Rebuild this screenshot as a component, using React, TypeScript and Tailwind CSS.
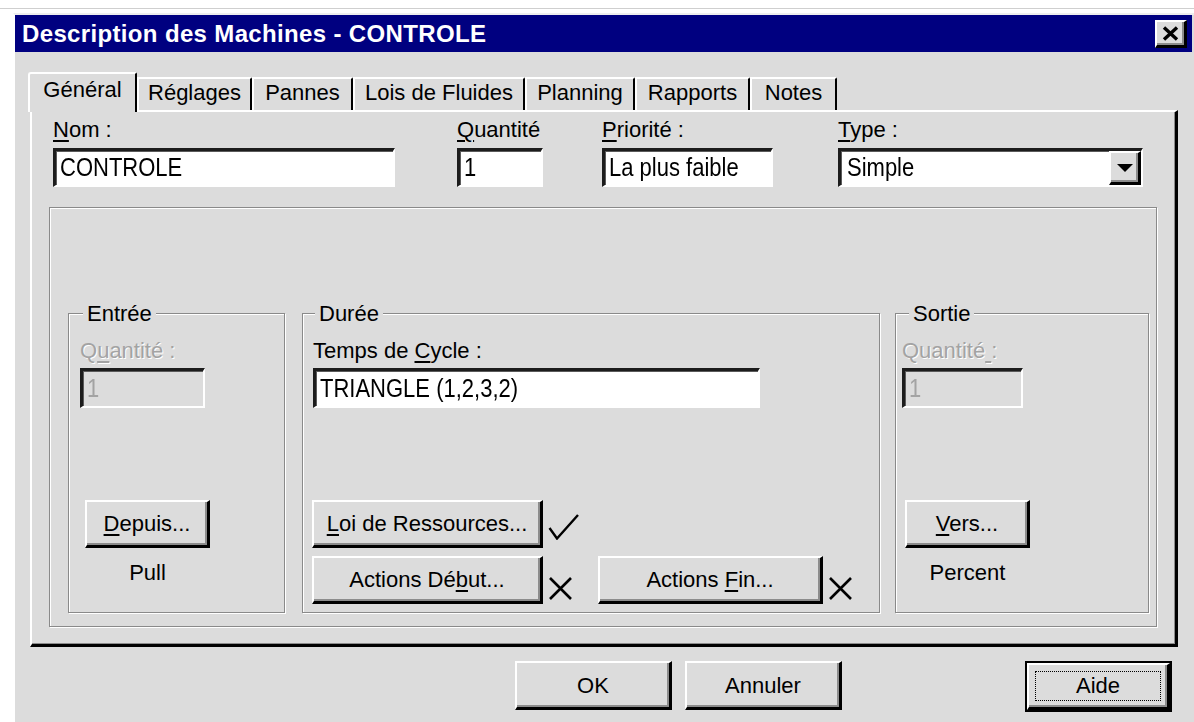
import React from "react";

const FACE = "bg-[#dcdcdc]";
const RAISED =
  "bg-[#dcdcdc] border-t-2 border-l-2 border-t-white border-l-white border-r-[3px] border-b-[3px] border-r-black border-b-black shadow-[inset_-2px_-2px_0_#8c8c8c]";
const SUNKEN =
  "border-t-[3px] border-l-[3px] border-t-[#1c1c1c] border-l-[#1c1c1c] border-r-2 border-b-2 border-r-white border-b-white shadow-[inset_1px_1px_0_#5a5a5a]";
const ETCHED = "border border-[#8a8a8a] shadow-[inset_1px_1px_0_#ffffff,1px_1px_0_#ffffff]";
// edit-field text is drawn a little taller than the dialog font
const FIELD_TEXT = "inline-block whitespace-nowrap scale-y-[1.16]";

function U({ children }: { children: React.ReactNode }) {
  return <span className="underline decoration-2 underline-offset-[3px]">{children}</span>;
}

function Button({ className = "", children }: { className?: string; children: React.ReactNode }) {
  return (
    <div className={`${RAISED} flex items-center justify-center h-[48px] ${className}`}>
      <span className="pt-[1px]">{children}</span>
    </div>
  );
}

function TextBox({
  className = "",
  value,
  disabled = false,
}: {
  className?: string;
  value: string;
  disabled?: boolean;
}) {
  return (
    <div
      className={`${SUNKEN} ${disabled ? FACE + " text-[#a3a3a3]" : "bg-white text-black"} flex items-center pl-[4px] ${className}`}
    >
      <span className={FIELD_TEXT}>{value}</span>
    </div>
  );
}

function Check() {
  return (
    <svg width="31" height="26" viewBox="0 0 31 26" className="shrink-0">
      <polyline points="1.5,14 9,24.5 30,1" fill="none" stroke="#000" strokeWidth="2.4" />
    </svg>
  );
}

function Cross() {
  return (
    <svg width="23" height="23" viewBox="0 0 23 23" className="shrink-0">
      <path d="M1,1 L22,22 M22,1 L1,22" stroke="#000" strokeWidth="2.6" fill="none" />
    </svg>
  );
}

function Group({
  className = "",
  legend,
  legendClass = "",
  children,
}: {
  className?: string;
  legend: string;
  legendClass?: string;
  children: React.ReactNode;
}) {
  return (
    <div className={`${ETCHED} h-[300px] flex flex-col ${className}`}>
      <div className={`-mt-[13px] h-[26px] px-[4px] w-fit bg-[#dcdcdc] ${legendClass}`}>{legend}</div>
      {children}
    </div>
  );
}

const TABS: { label: string; w: string }[] = [
  { label: "Réglages", w: "w-[115px] border-l-0" },
  { label: "Pannes", w: "w-[101px]" },
  { label: "Lois de Fluides", w: "w-[172px]" },
  { label: "Planning", w: "w-[110px]" },
  { label: "Rapports", w: "w-[115px]" },
  { label: "Notes", w: "w-[87px]" },
];

export default function App() {
  return (
    <div className="w-[1194px] h-[722px] overflow-hidden bg-white font-['Liberation_Sans',Arial,sans-serif] text-[22px] leading-[26px] text-black">
      {/* paper margin above the dialog */}
      <div className="h-[13px] pt-[8px]">
        <div className="h-px bg-[#cfcfcf]" />
      </div>

      {/* dialog window */}
      <div className="ml-[13px] w-[1181px] h-[709px] bg-[#dcdcdc] border-l-2 border-t-2 border-l-white border-t-[#eeeeee]">
        {/* caption */}
        <div className="h-[37px] w-[1177px] bg-[#000080] flex items-center justify-between pl-[7px] pr-[5px]">
          <span className="text-white font-bold text-[24px] tracking-[0.35px] whitespace-nowrap">
            Description des Machines - CONTROLE
          </span>
          <div className={`${RAISED} w-[32px] h-[28px] flex items-center justify-center`}>
            <svg width="17" height="15" viewBox="0 0 17 15">
              <path d="M2,1.5 L15,13.5 M15,1.5 L2,13.5" stroke="#000" strokeWidth="3.4" fill="none" />
            </svg>
          </div>
        </div>

        {/* tab strip */}
        <div className="mt-[20px] ml-[13px] h-[38px] flex items-start">
          <div className="relative z-10 w-[109px] h-[40px] -mb-[2px] bg-[#dcdcdc] border-t-2 border-l-2 border-t-white border-l-white border-r-2 border-r-black rounded-tl-[3px] rounded-tr-[2px] flex justify-center pt-[3px]">
            Général
          </div>
          {TABS.map((t) => (
            <div
              key={t.label}
              className={`${t.w} mt-[5px] h-[33px] border-t-2 border-l-2 border-t-white border-l-white border-r-2 border-r-black rounded-tr-[2px] flex justify-center pt-[1px] whitespace-nowrap`}
            >
              {t.label}
            </div>
          ))}
        </div>

        {/* tab page */}
        <div className="ml-[15px] w-[1148px] h-[537px] border-l-2 border-t-2 border-l-white border-t-white border-r-[3px] border-b-[3px] border-r-black border-b-black shadow-[inset_-1px_-1px_0_#8c8c8c]">
          {/* top fields */}
          <div className="flex pt-[5px]">
            <div className="ml-[21px] w-[342px]">
              <div className="h-[26px]">
                <U>N</U>om :
              </div>
              <TextBox className="mt-[5px] h-[39px] w-full" value="CONTROLE" />
            </div>
            <div className="ml-[62px] w-[86px]">
              <div className="h-[26px]">
                <U>Q</U>uantité
              </div>
              <TextBox className="mt-[5px] h-[39px] w-full" value="1" />
            </div>
            <div className="ml-[59px] w-[171px]">
              <div className="h-[26px]">
                <U>P</U>riorité :
              </div>
              <TextBox className="mt-[5px] h-[39px] w-full" value="La plus faible" />
            </div>
            <div className="ml-[65px] w-[305px]">
              <div className="h-[26px]">
                <U>T</U>ype :
              </div>
              <div className={`${SUNKEN} bg-white mt-[5px] h-[39px] w-full flex items-center justify-between pl-[6px]`}>
                <span className={FIELD_TEXT}>Simple</span>
                <div className={`${RAISED} w-[32px] h-full flex items-center justify-center`}>
                  <svg width="16" height="8" viewBox="0 0 16 8">
                    <path d="M0,0 L16,0 L8,8 Z" fill="#000" />
                  </svg>
                </div>
              </div>
            </div>
          </div>

          {/* inner frame */}
          <div className={`${ETCHED} mt-[20px] ml-[17px] w-[1108px] h-[420px] flex items-start pt-[105px] pl-[18px]`}>
            {/* Entrée */}
            <Group className="w-[217px] pl-[11px]" legend="Entrée" legendClass="ml-[3px]">
              <div className="mt-[11px] h-[26px] text-[#a3a3a3] [text-shadow:1px_1px_0_#fff]">
                Q<U>u</U>antité :
              </div>
              <TextBox className="mt-[4px] h-[40px] w-[125px]" value="1" disabled />
              <Button className="mt-[92px] ml-[5px] w-[125px]">
                <U>D</U>epuis...
              </Button>
              <div className="mt-[12px] ml-[5px] w-[125px] text-center">Pull</div>
            </Group>

            {/* Durée */}
            <Group className="ml-[17px] w-[578px] pl-[10px]" legend="Durée" legendClass="ml-[2px]">
              <div className="mt-[11px] h-[26px]">
                Temps de <U>C</U>ycle :
              </div>
              <TextBox className="mt-[4px] h-[40px] w-[447px]" value="TRIANGLE (1,2,3,2)" />
              <div className="mt-[92px] flex items-end">
                <Button className="w-[231px] -ml-[1px]">
                  <U>L</U>oi de Ressources...
                </Button>
                <div className="ml-[5px] mb-[8px]">
                  <Check />
                </div>
              </div>
              <div className="mt-[8px] flex items-end">
                <Button className="w-[231px] -ml-[1px]">
                  Actions Dé<U>b</U>ut...
                </Button>
                <div className="ml-[6px] mb-[4px]">
                  <Cross />
                </div>
                <Button className="ml-[26px] w-[225px]">
                  Actions <U>F</U>in...
                </Button>
                <div className="ml-[6px] mb-[4px]">
                  <Cross />
                </div>
              </div>
            </Group>

            {/* Sortie */}
            <Group className="ml-[15px] w-[254px] pl-[6px]" legend="Sortie" legendClass="ml-[7px]">
              <div className="mt-[11px] h-[26px] text-[#a3a3a3] [text-shadow:1px_1px_0_#fff]">
                Quantité<U> </U>:
              </div>
              <TextBox className="mt-[4px] h-[40px] w-[121px]" value="1" disabled />
              <Button className="mt-[92px] ml-[3px] w-[125px]">
                <U>V</U>ers...
              </Button>
              <div className="mt-[12px] ml-[3px] w-[125px] text-center">Percent</div>
            </Group>
          </div>
        </div>

        {/* dialog buttons */}
        <div className="mt-[14px] flex">
          <Button className="ml-[500px] w-[157px] !h-[49px]">OK</Button>
          <Button className="ml-[13px] w-[157px] !h-[49px]">Annuler</Button>
          <div className="ml-[183px] w-[147px] h-[51px] border-2 border-black">
            <div className={`${RAISED} w-full h-full p-[6px]`}>
              <div className="w-full h-full border border-dotted border-black flex items-center justify-center">
                Aide
              </div>
            </div>
          </div>
        </div>
      </div>
    </div>
  );
}
